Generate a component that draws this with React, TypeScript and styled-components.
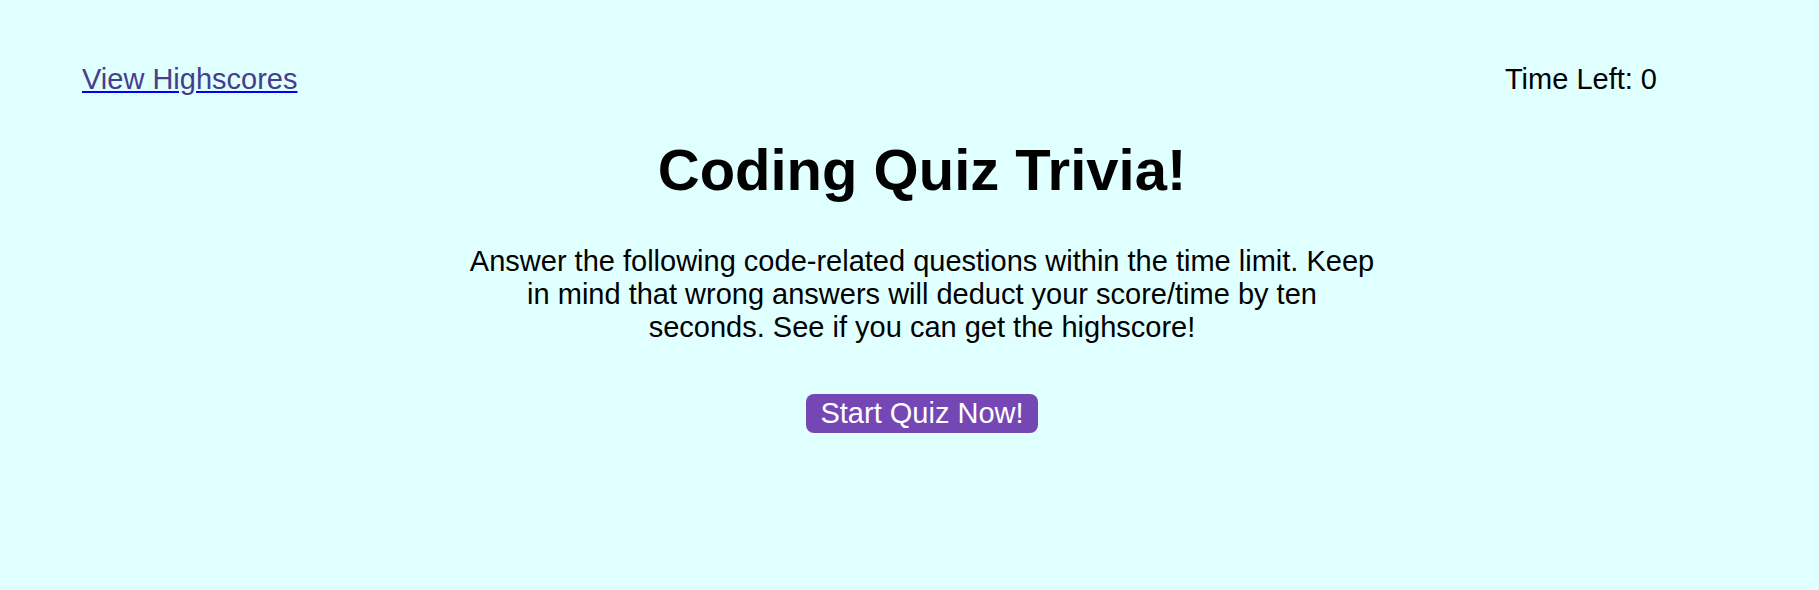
import React from "react";
import styled, { createGlobalStyle } from "styled-components";

const GlobalStyle = createGlobalStyle`
  html, body {
    margin: 0;
    padding: 0;
    background: #e0ffff;
    font-family: "Liberation Sans", Arial, sans-serif;
  }
`;

const Page = styled.div`
  min-height: 590px;
  padding-top: 63px;
  box-sizing: border-box;
`;

const Header = styled.header`
  display: flex;
  justify-content: space-between;
  align-items: baseline;
  padding: 0 162px 0 82px;
  font-size: 29px;
`;

const HighscoreLink = styled.a`
  color: #483d8b;
  text-decoration: underline;
  text-decoration-color: #0000ff;
  cursor: pointer;
`;

const Timer = styled.div`
  color: #000;
`;

const Main = styled.main`
  display: flex;
  flex-direction: column;
  align-items: center;
  padding-left: 25px;
  text-align: center;
`;

const Title = styled.h1`
  font-size: 58px;
  font-weight: bold;
  margin: 40px 0 0;
`;

const Intro = styled.p`
  font-size: 29px;
  max-width: 908px;
  margin: 42px 0 0;
  line-height: 33px;
`;

const StartButton = styled.button`
  margin-top: 50px;
  font-family: inherit;
  font-size: 29px;
  color: #fff;
  background: #7447b5;
  border: none;
  border-radius: 8px;
  padding: 3px 14px;
  cursor: pointer;
`;

export default function App() {
  return (
    <>
      <GlobalStyle />
      <Page>
        <Header>
          <HighscoreLink href="#">View Highscores</HighscoreLink>
          <Timer>Time Left: 0</Timer>
        </Header>
        <Main>
          <Title>Coding Quiz Trivia!</Title>
          <Intro>
            Answer the following code-related questions within the time limit. Keep in mind that
            wrong answers will deduct your score/time by ten seconds. See if you can get the
            highscore!
          </Intro>
          <StartButton>Start Quiz Now!</StartButton>
        </Main>
      </Page>
    </>
  );
}
